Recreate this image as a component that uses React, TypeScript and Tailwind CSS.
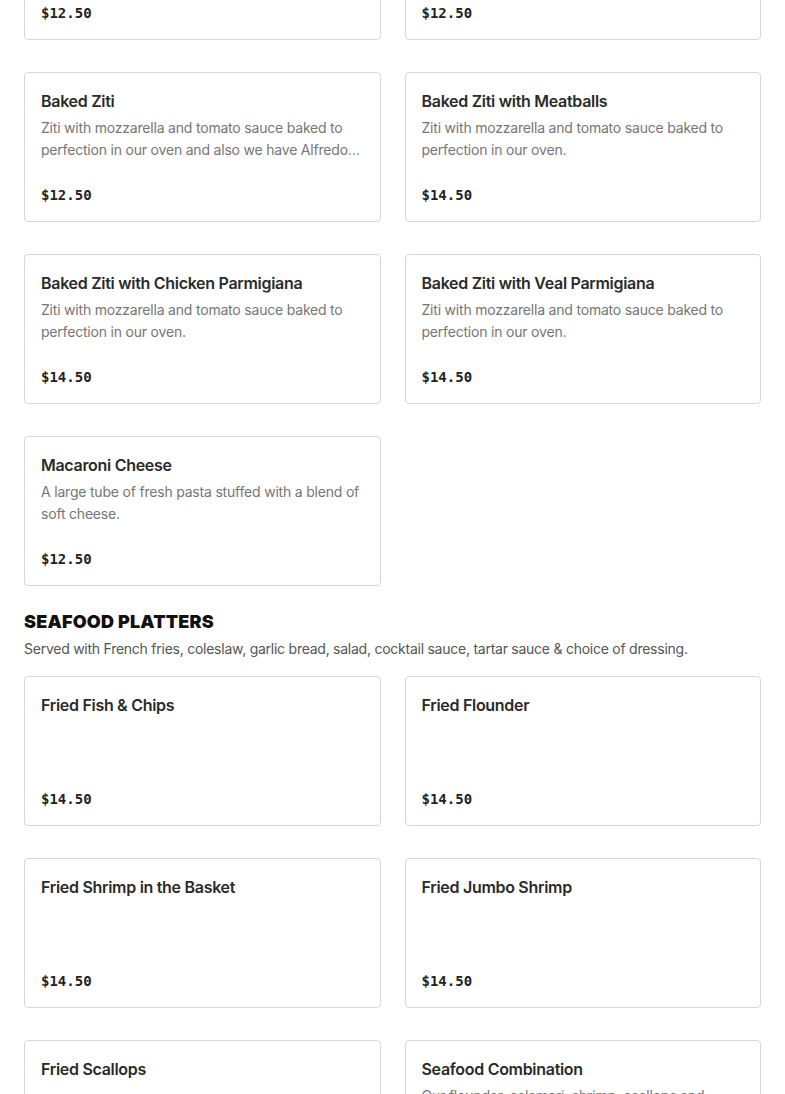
import React from "react";

type Item = { name: string; desc?: string; price: string };

const pasta: Item[] = [
  { name: "Stuffed Shells", desc: "Jumbo pasta shells stuffed with ricotta cheese and baked with tomato sauce.", price: "$12.50" },
  { name: "Manicotti", desc: "Pasta tubes stuffed with ricotta cheese, baked with tomato sauce and mozzarella.", price: "$12.50" },
  { name: "Baked Ziti", desc: "Ziti with mozzarella and tomato sauce baked to perfection in our oven and also we have Alfredo sauce available on request.", price: "$12.50" },
  { name: "Baked Ziti with Meatballs", desc: "Ziti with mozzarella and tomato sauce baked to perfection in our oven.", price: "$14.50" },
  { name: "Baked Ziti with Chicken Parmigiana", desc: "Ziti with mozzarella and tomato sauce baked to perfection in our oven.", price: "$14.50" },
  { name: "Baked Ziti with Veal Parmigiana", desc: "Ziti with mozzarella and tomato sauce baked to perfection in our oven.", price: "$14.50" },
  { name: "Macaroni Cheese", desc: "A large tube of fresh pasta stuffed with a blend of soft cheese.", price: "$12.50" },
];

const seafood: Item[] = [
  { name: "Fried Fish & Chips", price: "$14.50" },
  { name: "Fried Flounder", price: "$14.50" },
  { name: "Fried Shrimp in the Basket", price: "$14.50" },
  { name: "Fried Jumbo Shrimp", price: "$14.50" },
  { name: "Fried Scallops", price: "$14.50" },
  { name: "Seafood Combination", desc: "Our flounder, calamari, shrimp, scallops and clams fried golden.", price: "$16.50" },
];

function Card({ item }: { item: Item }) {
  return (
    <div className="flex h-[150px] flex-col rounded-[4px] border border-[#d6d6d6] bg-white p-4">
      <div className="text-[16px] font-semibold leading-6 tracking-[-0.3px] text-[#2a2a2a] [font-family:Inter,'Noto_Sans',sans-serif]">
        {item.name}
      </div>
      {item.desc && (
        <div className="mt-1 line-clamp-2 text-[14px] leading-[22px] tracking-[-0.2px] text-[#767676] [font-family:Inter,'Noto_Sans',sans-serif]">
          {item.desc}
        </div>
      )}
      <div className="mt-auto text-[14px] font-bold leading-5 text-[#222222] [font-family:'DejaVu_Sans_Mono',monospace]">
        {item.price}
      </div>
    </div>
  );
}

export default function App() {
  return (
    <div className="min-h-screen overflow-hidden bg-white">
      <div className="-mt-[110px] px-6">
        <div className="grid grid-cols-2 gap-x-6 gap-y-8">
          {pasta.map((it) => (
            <Card key={it.name} item={it} />
          ))}
        </div>
        <h2 className="mt-6 text-[18px] font-black uppercase leading-6 tracking-[0.2px] text-[#111111] [font-family:Inter,'Noto_Sans',sans-serif]">
          Seafood Platters
        </h2>
        <p className="mt-1 text-[14px] leading-[22px] tracking-[-0.25px] text-[#555555] [font-family:Inter,'Noto_Sans',sans-serif]">
          Served with French fries, coleslaw, garlic bread, salad, cocktail sauce, tartar sauce &amp; choice of dressing.
        </p>
        <div className="mt-4 grid grid-cols-2 gap-x-6 gap-y-8 pb-8">
          {seafood.map((it) => (
            <Card key={it.name} item={it} />
          ))}
        </div>
      </div>
    </div>
  );
}
